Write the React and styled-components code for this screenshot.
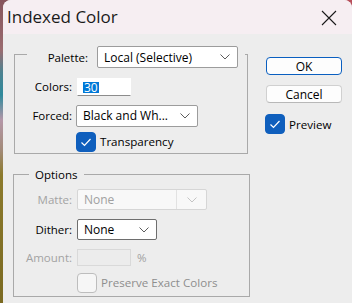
import React from "react";
import styled, { createGlobalStyle } from "styled-components";

const GlobalStyle = createGlobalStyle`
	html, body {
		margin: 0;
		padding: 0;
		background: #ededed;
	}
	body {
		font-family: "Open Sans", "Noto Sans", sans-serif;
		font-size: 11.5px;
		color: #000;
	}
`;

const Chevron = ({ color = "#5c5c5c" }) => (
	<svg width="10" height="6" viewBox="0 0 10 6">
		<polyline points="0.5,0.5 5,5 9.5,0.5" fill="none" stroke={color} strokeWidth="1" />
	</svg>
);

const Check = () => (
	<svg width="20" height="20" viewBox="0 0 20 20">
		<polyline points="5.5,10.5 8.5,13.5 14.5,7" fill="none" stroke="#fff" strokeWidth="1.2" />
	</svg>
);

const App = () => {
	return (
		<>
			<GlobalStyle />
			<Screen>
				<Window>
					<TitleBar>
						<Title>Indexed Color</Title>
						<CloseButton>
							<svg width="16" height="16" viewBox="0 0 16 16">
								<path d="M1 1 L15 15 M15 1 L1 15" stroke="#1a1a1a" strokeWidth="1.1" fill="none" />
							</svg>
						</CloseButton>
					</TitleBar>

					<Body>
						<Column>
							<Group $left={11} $width={234} $top={20} $bottom={1}>
								<PaletteHeader>
									<Label $width={61}>Palette:</Label>
									<Select $width={141} $height={22} $gap={9}>
										<span>Local (Selective)</span>
										<Chevron />
									</Select>
								</PaletteHeader>

								<Row $top={10}>
									<Label $width={57}>Colors:</Label>
									<TextInput $gap={5}>
										<Selected>30</Selected>
									</TextInput>
								</Row>

								<Row $top={9}>
									<Label $width={57}>Forced:</Label>
									<Select $width={122} $height={22} $gap={4}>
										<span>Black and Wh...</span>
										<Chevron />
									</Select>
								</Row>

								<Row $top={5}>
									<CheckRow $indent={61}>
										<Box $checked>
											<Check />
										</Box>
										<span>Transparency</span>
									</CheckRow>
								</Row>
							</Group>

							<Group $left={10} $width={237} $top={20} $bottom={3}>
								<Legend>Options</Legend>

								<Row $top={6}>
									<Label $width={58} $disabled>
										Matte:
									</Label>
									<Select $width={130} $height={21} $gap={5} $disabled>
										<span>None</span>
										<ArrowCell>
											<Chevron color="#c4c4c4" />
										</ArrowCell>
									</Select>
								</Row>

								<Row $top={9}>
									<Label $width={58}>Dither:</Label>
									<Select $width={80} $height={21} $gap={5} $dark>
										<span>None</span>
										<Chevron />
									</Select>
								</Row>

								<Row $top={9}>
									<Label $width={58} $disabled>
										Amount:
									</Label>
									<TextInput $gap={5} $disabled />
									<Unit>%</Unit>
								</Row>

								<Row $top={7}>
									<CheckRow $indent={63} $disabled>
										<Box />
										<span>Preserve Exact Colors</span>
									</CheckRow>
								</Row>
							</Group>
						</Column>

						<Side>
							<Button $primary>OK</Button>
							<Button>Cancel</Button>
							<CheckRow $indent={0} $top={11}>
								<Box $checked>
									<Check />
								</Box>
								<span>Preview</span>
							</CheckRow>
						</Side>
					</Body>
				</Window>
			</Screen>
		</>
	);
};

// Styled Components
const Screen = styled.div`
	width: 352px;
	height: 303px;
	overflow: hidden;
	display: flex;
	background: radial-gradient(circle at 100% 0, #b8505c 0 11px, transparent 12px),
		linear-gradient(
			to bottom,
			#86545c 0px,
			#9a6c70 50px,
			#4d8290 72px,
			#2f8a9c 95px,
			#b497a8 120px,
			#a28a78 150px,
			#8c7a2c 175px,
			#7b6a22 303px
		);
`;

const Window = styled.div`
	flex: 1;
	margin-left: 3px;
	background: #ededed;
	border-radius: 8px 8px 0 0;
	overflow: hidden;
	display: flex;
	flex-direction: column;
`;

const TitleBar = styled.div`
	height: 34px;
	flex: none;
	background: #f6eef2;
	display: flex;
	align-items: center;
	justify-content: space-between;
	padding: 0 15px 0 4px;
`;

const Title = styled.div`
	font-size: 17px;
	color: #1a1a1a;
	margin-top: -1px;
`;

const CloseButton = styled.div`
	width: 16px;
	height: 16px;
	display: flex;
	margin-top: 1px;
`;

const Body = styled.div`
	display: flex;
	flex: 1;
`;

const Column = styled.div`
	width: 247px;
	display: flex;
	flex-direction: column;
`;

const Group = styled.div`
	margin: ${(p) => p.$top}px 0 0 ${(p) => p.$left}px;
	width: ${(p) => p.$width}px;
	box-sizing: border-box;
	border: 1px solid #a9a9a9;
	padding-bottom: ${(p) => p.$bottom}px;
	display: flex;
	flex-direction: column;
`;

const PaletteHeader = styled.div`
	display: flex;
	align-items: center;
	height: 22px;
	margin: -9px 2px 0 12px;
	padding-right: 6px;
	background: #ededed;
`;

const Legend = styled.div`
	align-self: flex-start;
	height: 16px;
	line-height: 16px;
	margin: -8px 0 0 15px;
	padding: 0 7px 0 6px;
	background: #ededed;
`;

const Row = styled.div`
	display: flex;
	align-items: center;
	margin-top: ${(p) => p.$top}px;
	line-height: 16px;
`;

const Label = styled.div`
	width: ${(p) => p.$width}px;
	flex: none;
	text-align: right;
	color: ${(p) => (p.$disabled ? "#a3a3a3" : "#000")};
`;

const Select = styled.div`
	box-sizing: border-box;
	width: ${(p) => p.$width}px;
	height: ${(p) => p.$height}px;
	margin-left: ${(p) => p.$gap}px;
	display: flex;
	align-items: center;
	justify-content: space-between;
	padding: 0 ${(p) => (p.$disabled ? 0 : 7)}px 0 6px;
	background: ${(p) => (p.$disabled ? "#f8f8f8" : "#fff")};
	border: 1px solid
		${(p) => (p.$disabled ? "#d6d6d6" : p.$dark ? "#6e6e6e" : "#9c9c9c")};
	border-radius: 2px;
	color: ${(p) => (p.$disabled ? "#a0a0a0" : "#000")};
	font-size: 12px;
	svg {
		flex: none;
	}
`;

const ArrowCell = styled.div`
	width: 29px;
	align-self: stretch;
	border-left: 1px solid #e2e2e2;
	display: flex;
	align-items: center;
	justify-content: center;
`;

const TextInput = styled.div`
	box-sizing: border-box;
	width: 54px;
	height: ${(p) => (p.$disabled ? 17 : 18)}px;
	margin-left: ${(p) => p.$gap}px;
	display: flex;
	align-items: center;
	padding-left: 5px;
	background: ${(p) => (p.$disabled ? "#ececec" : "#fff")};
	border: 1px solid ${(p) => (p.$disabled ? "#d9d9d9" : "#fff")};
	border-bottom-color: ${(p) => (p.$disabled ? "#d9d9d9" : "#8c8c8c")};
	font-size: 12px;
`;

const Selected = styled.span`
	background: #0078d7;
	color: #fff;
	line-height: 11px;
	padding: 0 1px;
`;

const Unit = styled.span`
	margin-left: 6px;
	color: #a0a0a0;
`;

const CheckRow = styled.div`
	display: flex;
	align-items: center;
	gap: 4px;
	height: 20px;
	margin-left: ${(p) => p.$indent}px;
	margin-top: ${(p) => p.$top || 0}px;
	color: ${(p) => (p.$disabled ? "#8e8e8e" : "#000")};
	font-size: 11.6px;
`;

const Box = styled.div`
	width: 20px;
	height: 20px;
	box-sizing: border-box;
	border-radius: 4px;
	flex: none;
	background: ${(p) => (p.$checked ? "#0f5fbd" : "#f6f6f6")};
	border: 1px solid ${(p) => (p.$checked ? "#0f5fbd" : "#bdbdbd")};
	display: flex;
	align-items: center;
	justify-content: center;
	svg {
		margin: -1px;
	}
`;

const Side = styled.div`
	margin: 23px 0 0 15px;
	display: flex;
	flex-direction: column;
	width: 78px;
`;

const Button = styled.div`
	box-sizing: border-box;
	width: 76px;
	height: 18px;
	margin: ${(p) => (p.$primary ? 0 : 10)}px 0 0 1px;
	display: flex;
	align-items: center;
	justify-content: center;
	background: #fdfdfd;
	border: 1px solid ${(p) => (p.$primary ? "#0a5fc0" : "#d0d0d0")};
	border-bottom-color: ${(p) => (p.$primary ? "#0a5fc0" : "#b8b8b8")};
	border-radius: 4px;
	font-size: 12px;
`;

export default App;
